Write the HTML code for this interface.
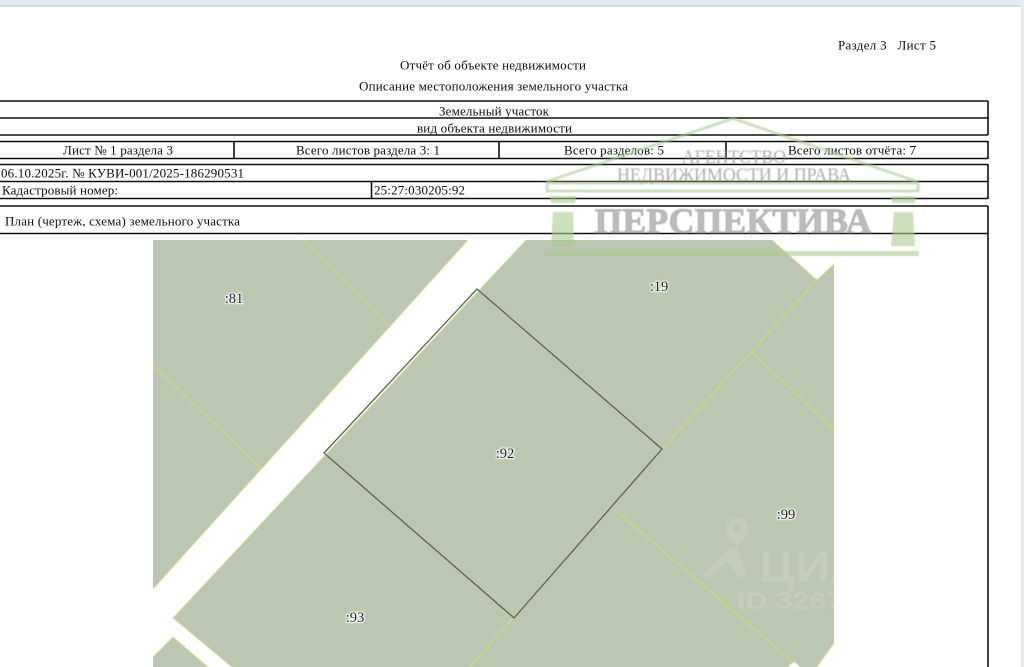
<!DOCTYPE html>
<html lang="ru">
<head>
<meta charset="utf-8">
<title>Отчёт об объекте недвижимости</title>
<style>
html,body{margin:0;padding:0;background:#fff;}
body{width:1024px;height:667px;overflow:hidden;position:relative;}
svg{position:absolute;left:0;top:0;display:block;}
text{font-family:"Liberation Serif","Noto Serif CJK SC",serif;}
.t text{font-size:13px;fill:#0d0d0d;}
</style>
</head>
<body>
<svg width="1024" height="667" viewBox="0 0 1024 667" xmlns="http://www.w3.org/2000/svg">
<defs>
<filter id="b" x="-2%" y="-2%" width="104%" height="104%"><feGaussianBlur stdDeviation="0.3"/></filter>
<filter id="b2" x="-2%" y="-2%" width="104%" height="104%"><feGaussianBlur stdDeviation="0.6"/></filter>
<filter id="halo" x="-30%" y="-30%" width="160%" height="160%"><feGaussianBlur stdDeviation="0.8"/></filter>
</defs>

<rect width="1024" height="667" fill="#fff"/>
<rect x="0" y="0" width="1024" height="5" fill="#e4eaef"/>
<rect x="0" y="5" width="1024" height="2" fill="#d3dbe1"/>
<rect x="1021" y="0" width="3" height="667" fill="#e8ecef"/>

<!-- map -->
<g filter="url(#b)">
<rect x="153" y="240" width="681" height="427" fill="#bcc7b1"/>
<!-- white areas -->
<polygon points="468,240 153,589 153,657 173,637 208,667 232,667 173,618 526,240" fill="#fff"/>
<polygon points="772,240 817,280 834,264 834,240" fill="#fff"/>
<polygon points="834,643 817,667 834,667" fill="#fff"/>
<polygon points="788,667 794,661 800,667" fill="#fff"/>
<!-- road edges -->
<g fill="none" stroke="#d8e39a" stroke-width="1">
<polyline points="468,240 153,589"/>
<polyline points="526,240 173,618 232,667"/>
<polyline points="153,657 173,637 208,667"/>
<polyline points="772,240 817,280 834,264"/>
<polyline points="834,643 817,667"/>
</g>
<!-- parcel boundaries -->
<g fill="none" stroke="#c9d488" stroke-width="1.800">
<line x1="303" y1="240" x2="390" y2="327"/>
<line x1="153" y1="365" x2="261" y2="468"/>
<line x1="817" y1="280" x2="662" y2="449"/>
<line x1="752" y1="352" x2="834" y2="430"/>
<line x1="615" y1="510" x2="794" y2="663"/>
<line x1="513" y1="618" x2="470" y2="667"/>
</g>
<!-- main parcel -->
<polygon points="477,289 662,449 514,618 324,453" fill="none" stroke="#5c6450" stroke-width="1.300"/>
</g>

<!-- Cian watermark -->
<g fill="#fff" opacity="0.11" filter="url(#b)">
<path d="M737 518c-6.500 0-11 4.800-11 10.500 0 6.500 7 13 11 17 4-4 11-10.500 11-17 0-5.700-4.500-10.500-11-10.500zm0 7a4 4 0 1 1 0 8 4 4 0 0 1 0-8z" fill-rule="evenodd"/>
<path d="M703 575l27-27h8v4l9 22-6 5-14-18-18 18z"/>
<text x="759" y="582" style="font-family:'Liberation Sans',sans-serif;font-weight:700;font-size:44px" textLength="142" lengthAdjust="spacingAndGlyphs">ЦИАН</text>
<text x="737" y="609" style="font-family:'Liberation Sans',sans-serif;font-weight:700;font-size:24px" textLength="106" lengthAdjust="spacingAndGlyphs">ID 3267</text>
</g>

<!-- map labels -->
<g font-size="14.500" text-anchor="middle" fill="#1c2226">
<g filter="url(#halo)" fill="#fff" stroke="#fff" stroke-width="2">
<text x="234" y="303">:81</text>
<text x="659" y="291">:19</text>
<text x="505" y="458">:92</text>
<text x="786" y="519">:99</text>
<text x="355" y="622">:93</text>
</g>
<text x="234" y="303">:81</text>
<text x="659" y="291">:19</text>
<text x="505" y="458">:92</text>
<text x="786" y="519">:99</text>
<text x="355" y="622">:93</text>
</g>

<!-- table lines -->
<g filter="url(#b)" stroke="#111" stroke-width="1.600" fill="none">
<line x1="0" y1="101" x2="988" y2="101"/>
<line x1="0" y1="118" x2="988" y2="118"/>
<line x1="0" y1="135" x2="988" y2="135"/>
<line x1="0" y1="141.500" x2="988" y2="141.500"/>
<line x1="0" y1="158.500" x2="988" y2="158.500"/>
<line x1="0" y1="164.500" x2="988" y2="164.500"/>
<line x1="0" y1="181.500" x2="988" y2="181.500"/>
<line x1="0" y1="198.500" x2="988" y2="198.500"/>
<line x1="0" y1="206" x2="988" y2="206"/>
<line x1="0" y1="233.500" x2="988" y2="233.500"/>
<line x1="988" y1="101" x2="988" y2="135"/>
<line x1="988" y1="141" x2="988" y2="159"/>
<line x1="988" y1="164" x2="988" y2="199"/>
<line x1="988" y1="206" x2="988" y2="667"/>
<line x1="234" y1="141" x2="234" y2="159"/>
<line x1="499" y1="141" x2="499" y2="159"/>
<line x1="726" y1="141" x2="726" y2="159"/>
<line x1="371.500" y1="182" x2="371.500" y2="198"/>
</g>

<!-- table text -->
<g class="t" filter="url(#b)" transform="translate(0,0.7)">
<text x="838" y="49" textLength="98" lengthAdjust="spacing" xml:space="preserve">Раздел 3   Лист 5</text>
<text x="400" y="69" textLength="186">Отчёт об объекте недвижимости</text>
<text x="359" y="90" textLength="269">Описание местоположения земельного участка</text>
<text x="439" y="115" textLength="110">Земельный участок</text>
<text x="417" y="132" textLength="155">вид объекта недвижимости</text>
<text x="63" y="154" textLength="110">Лист № 1 раздела 3</text>
<text x="296" y="154" textLength="144">Всего листов раздела 3: 1</text>
<text x="564" y="154" textLength="100">Всего разделов: 5</text>
<text x="788" y="154" textLength="128">Всего листов отчёта: 7</text>
<text x="1" y="177" textLength="243">06.10.2025г. № КУВИ-001/2025-186290531</text>
<text x="2" y="194" textLength="116">Кадастровый номер:</text>
<text x="374" y="194" textLength="91">25:27:030205:92</text>
<text x="5" y="225" textLength="235">План (чертеж, схема) земельного участка</text>
</g>

<!-- agency watermark -->
<g filter="url(#b2)">
<g fill="none" stroke="#a9cb8e" stroke-opacity="0.58">
<path d="M547 181.500L733 118.500L917 181.500" stroke-width="3"/>
<rect x="547" y="183" width="371" height="8" stroke-width="3"/>
</g>
<g fill="#a9cb8e" fill-opacity="0.6">
<polygon points="550,196 576,196 575,203 551,203"/>
<polygon points="553,212 573,212 574,246 551,246"/>
<polygon points="891,196 916,196 915,203 892,203"/>
<polygon points="894,212 913,212 915,246 891,246"/>
<rect x="545" y="251" width="374" height="5"/>
</g>
<g text-anchor="middle" fill="#8d8d8d" fill-opacity="0.72">
<text x="734" y="163" font-size="19" textLength="104" lengthAdjust="spacingAndGlyphs">АГЕНТСТВО</text>
<text x="734" y="181" font-size="19" textLength="234" lengthAdjust="spacingAndGlyphs">НЕДВИЖИМОСТИ И ПРАВА</text>
<text x="733" y="233" font-size="36" font-weight="700" fill="#8f8f8f" stroke="#8f8f8f" stroke-width="0.8" fill-opacity="0.6" stroke-opacity="0.6" textLength="277" lengthAdjust="spacingAndGlyphs">ПЕРСПЕКТИВА</text>
</g>
</g>
</svg>
</body>
</html>
